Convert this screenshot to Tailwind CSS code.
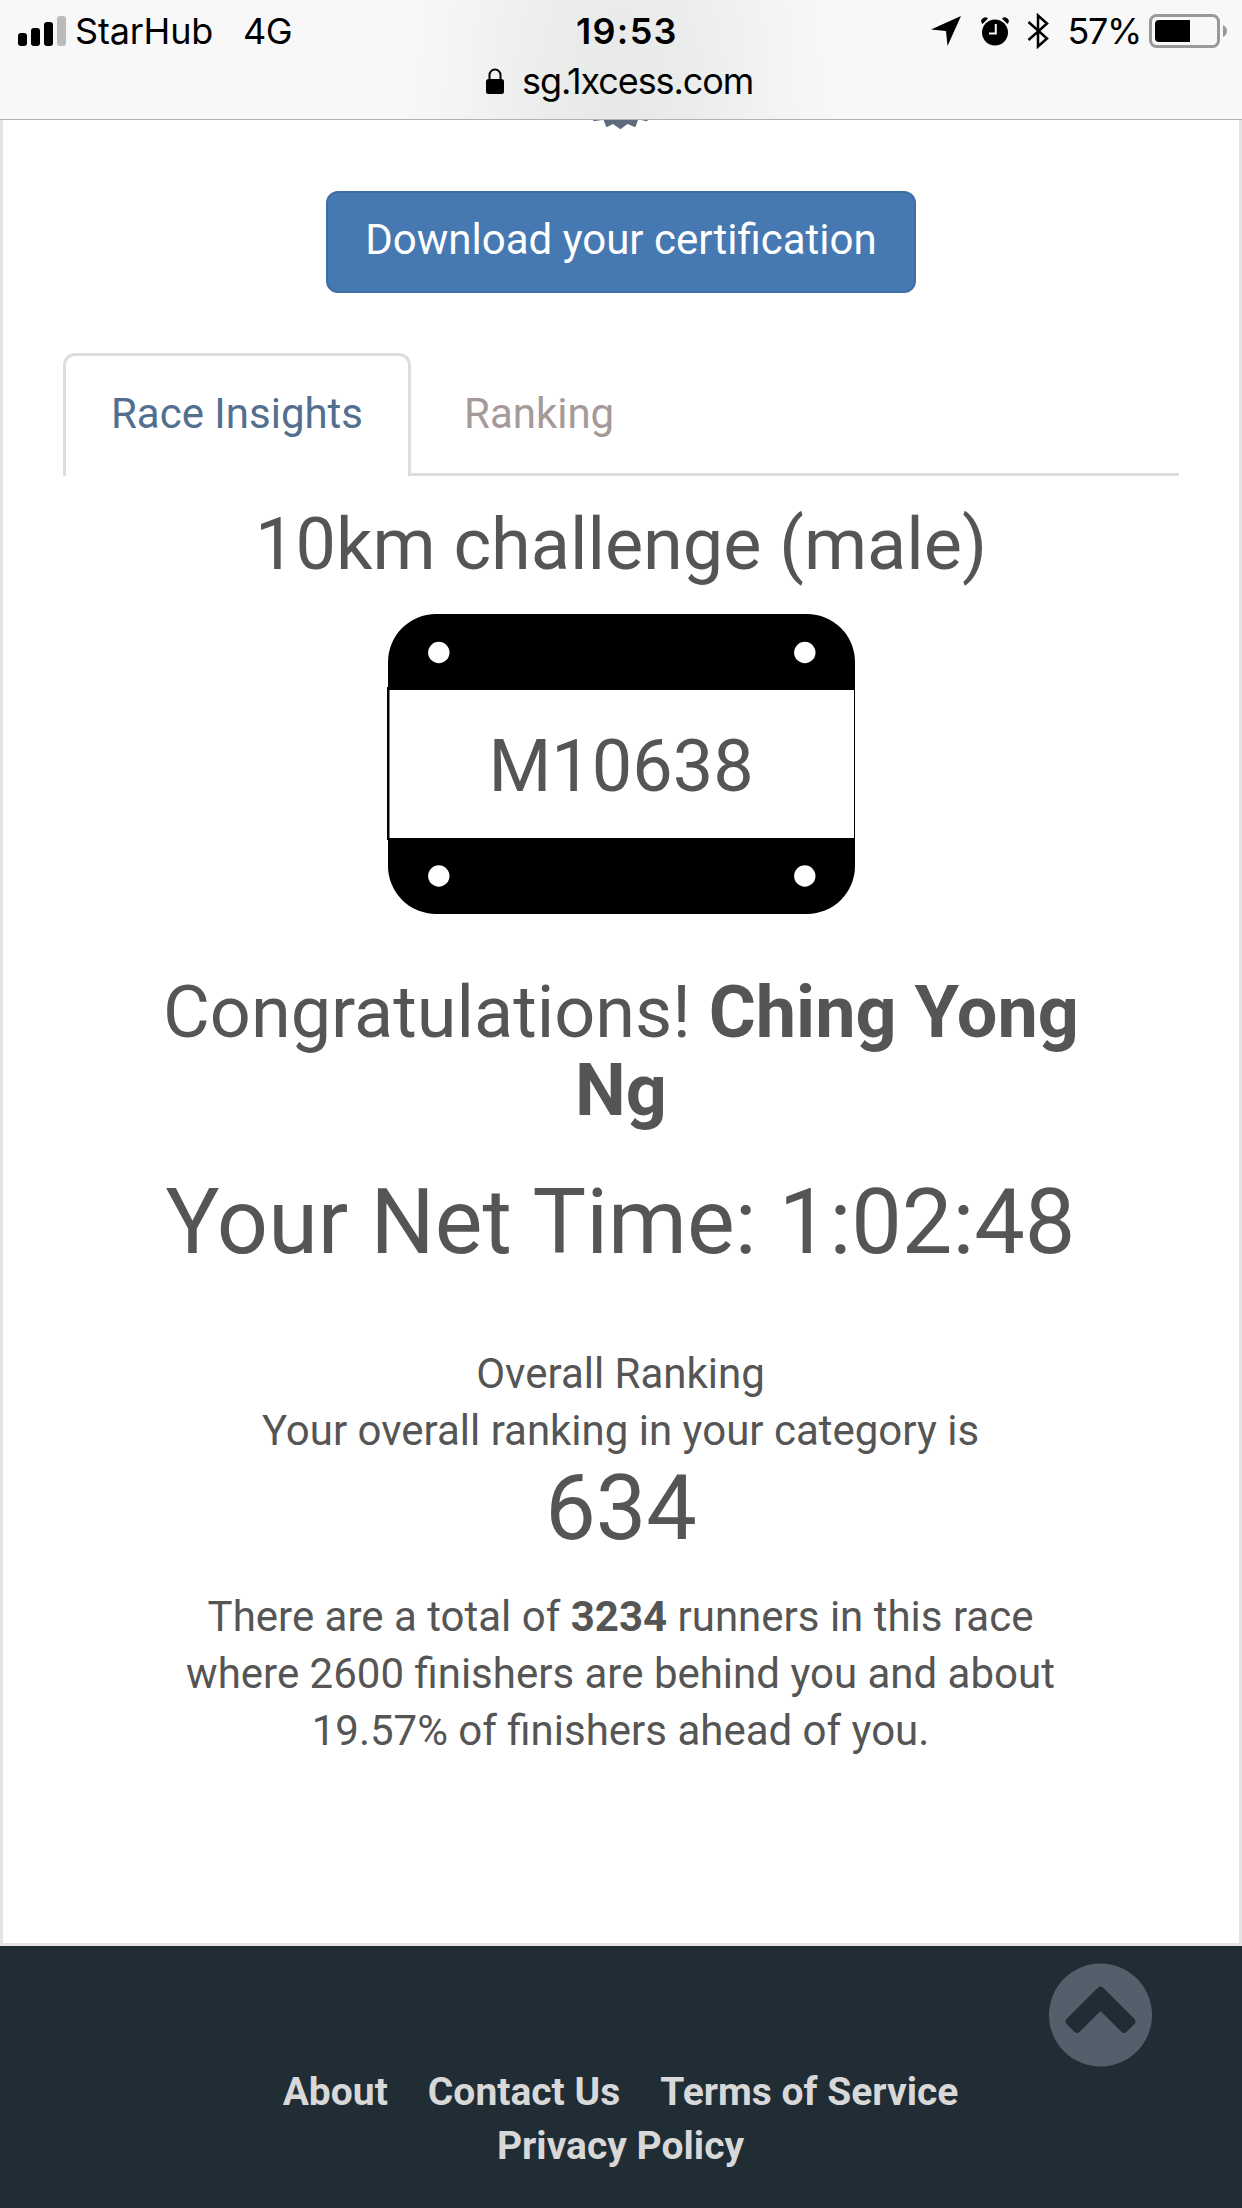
<!DOCTYPE html>
<html lang="en">
<head>
    <meta charset="UTF-8">
    <title>Race Result</title>
    <script src="https://cdn.jsdelivr.net/npm/@tailwindcss/browser@4"></script>
</head>
<body class="bg-white">
<div class="w-[1242px] h-[2208px] overflow-hidden flex flex-col font-[Roboto,sans-serif] text-[#555]">
    <!-- Browser Bar -->
    <header class="h-[120px] shrink-0 border-b border-[#b2b2b2] bg-[#f8f8f8] bg-[radial-gradient(ellipse_215px_420px_at_620px_110px,#e7e9e7_0%,#eceeed_40%,#f8f8f8_100%)] text-black font-[Inter,sans-serif]">
        <div class="relative h-[62px] flex items-center justify-between pl-[18px] pr-[15px]">
            <div class="flex items-center">
                <svg class="w-12 h-[30px]" viewBox="0 0 48 30">
                    <rect x="0" y="17" width="9" height="13" rx="3" />
                    <rect x="13" y="12" width="9" height="18" rx="3" />
                    <rect x="26" y="6" width="9" height="24" rx="3" />
                    <rect x="39" y="0" width="9" height="30" rx="3" fill="#bbb" />
                </svg>
                <span class="ml-[9px] text-[36px] tracking-[-0.2px]">StarHub</span>
                <span class="ml-[30px] text-[36px] tracking-[-0.6px]">4G</span>
            </div>
            <div class="absolute left-[576px] text-[36px] font-semibold tracking-[1.3px]">19:53</div>
            <div class="flex items-center">
                <svg class="w-[30px] h-[30px]" viewBox="0 0 30 30">
                    <path d="M30 0L16.500 30L15 15L0 13.500Z" />
                </svg>
                <svg class="ml-5 w-[28px] h-[29px]" viewBox="0 0 28 29">
                    <circle cx="14" cy="15.500" r="13" />
                    <path d="M1.500 7Q-1 4 1 2Q4-1 7 1.500ZM26.500 7Q29 4 27 2Q24-1 21 1.500Z" />
                    <path d="M14.800 7v9.500H8" fill="none" stroke="#f8f8f8" stroke-width="2" />
                </svg>
                <svg class="ml-[18px] w-[22px] h-9" viewBox="0 0 22 36" fill="none" stroke="#000" stroke-width="2.500">
                    <path d="M1.500 9L20 25.500L11 33.500V2.500L20 10.500L1.500 27" />
                </svg>
                <span class="ml-[19px] text-[36px] tracking-[-1.4px]">57%</span>
                <svg class="ml-[8px] w-[78px] h-[34px]" viewBox="0 0 78 34">
                    <rect x="1.500" y="1.500" width="68" height="31" rx="6" fill="none" stroke="#999" stroke-width="3" />
                    <path d="M10 6h31v22H10a4 4 0 0 1-4-4V10a4 4 0 0 1 4-4z" />
                    <path d="M74 11q4 2 4 6t-4 6z" fill="#999" />
                </svg>
            </div>
        </div>
        <div class="flex items-center h-[38px] pl-[486px]">
            <svg class="w-[18px] h-[26px]" viewBox="0 0 18 26">
                <path d="M3.500 13V7a5.500 5.500 0 0 1 11 0v6" fill="none" stroke="#000" stroke-width="2" />
                <rect y="11" width="18" height="15" rx="2.500" />
            </svg>
            <span class="ml-[18px] text-[36px] tracking-[-1.1px]">sg.1xcess.com</span>
        </div>
    </header>

    <!-- Result Card -->
    <main class="h-[1826px] shrink-0 border-x-3 border-b-3 border-[#e4e4e4] px-[60px] text-center text-[42px] leading-[57px]">
        <svg class="mx-auto w-[56px] h-[10px]" viewBox="0 0 56 10" fill="#5d6b7c">
            <path d="M0 0L1 1.300L9 0ZM10.500 0L13.500 7.300L20 4L27.500 9.300L34.500 4L42.300 7.300L45 0ZM48 0L54 1.300L55 0Z" />
        </svg>
        <a href="#" class="mt-[61px] mx-auto flex justify-center w-[590px] h-[102px] border-2 border-[#3f6ea3] rounded-xl bg-[#4679b2] text-white pt-[18px]">Download your certification</a>

        <!-- Tabs -->
        <div class="mt-[60px] flex">
            <div class="w-[348px] h-[123px] border-3 border-b-0 border-[#ddd] rounded-t-xl pt-[29px] text-[#536f8f]">Race Insights</div>
            <div class="flex-1 border-b-3 border-[#ddd] pl-[53px] pt-8 text-left text-[#a59a98]">Ranking</div>
        </div>

        <h3 class="mt-[29px] text-[72px] leading-[79px]">10km challenge (male)</h3>

        <!-- Bib -->
        <div class="relative mt-[30px] mx-auto w-[468px] h-[300px]">
            <svg class="absolute inset-0 w-full h-full" viewBox="0 0 468 300">
                <rect x="1" width="467" height="300" rx="48" />
                <path d="M0 73h468v153H0z" />
                <path d="M2.500 76h464.500v148H2.500z" fill="#fff" />
                <g fill="#fff">
                    <circle cx="51.800" cy="38.500" r="10.700" />
                    <circle cx="417.800" cy="38.500" r="10.700" />
                    <circle cx="51.800" cy="262" r="10.700" />
                    <circle cx="417.800" cy="262" r="10.700" />
                </g>
            </svg>
            <div class="relative pt-[113px] text-[72px] leading-[79px]">M10638</div>
        </div>

        <h3 class="mt-[60px] px-[90px] text-[72px] leading-[78px]">Congratulations! <b>Ching Yong Ng</b></h3>
        <h2 class="mt-[43px] pr-px text-[90px] leading-[99px]">Your Net Time: 1:02:48</h2>
        <p class="mt-[73px] pr-px">Overall Ranking<br>Your overall ranking in your category is</p>
        <h2 class="text-[90px] leading-[99px]">634</h2>
        <p class="mt-[30px] pr-px">There are a total of <b>3234</b> runners in this race<br>where 2600 finishers are behind you and about<br>19.57% of finishers ahead of you.</p>
    </main>

    <!-- Footer -->
    <footer class="relative flex-1 bg-[#212d35] pt-[119px] text-[39px] leading-[54px] font-bold text-[#d8d8d8]">
        <div class="flex justify-center gap-10 pr-px">
            <a href="#">About</a>
            <a href="#">Contact Us</a>
            <a href="#">Terms of Service</a>
        </div>
        <div class="text-center pr-px"><a href="#">Privacy Policy</a></div>
        <a href="#" class="absolute left-[1049px] top-[17px]">
            <svg class="w-[104px] h-[104px]" viewBox="0 0 104 104">
                <circle cx="51.500" cy="52" r="51.500" fill="#535f6b" />
                <path d="M49 24.500q2.500-2 5 0l31.500 31.500q2 2.500 0 5l-8 8q-2.500 2-5 0L51.500 48L30.500 69q-2.500 2-5 0l-8-8q-2-2.500 0-5z" fill="#212d35" />
            </svg>
        </a>
    </footer>
</div>
</body>
</html>
